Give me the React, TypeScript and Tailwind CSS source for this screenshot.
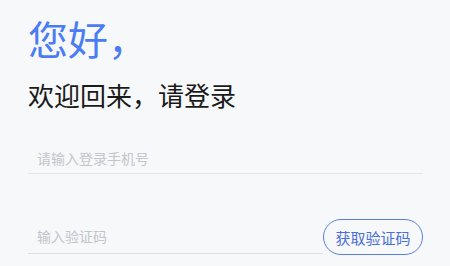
import React from "react";

export default function App() {
  return (
    <div
      className="w-[450px] h-[266px] bg-[#f7f8fa] pl-[28px] pr-[27px] overflow-hidden"
      style={{ fontFamily: '"Noto Sans CJK SC", "Noto Sans", sans-serif' }}
    >
      <div className="pt-[18px] text-[40px] leading-[40px] text-[#4a7cf3]">您好，</div>
      <div className="mt-[24px] text-[26px] leading-[26px] text-[#1a1a1a]">欢迎回来，请登录</div>
      <div className="mt-[35px] h-[31px] border-b border-[#e4e6eb] flex items-center">
        <input
          className="w-full bg-transparent outline-none pl-[9px] text-[14px] text-[#333] placeholder:text-[#c2c5cc]"
          placeholder="请输入登录手机号"
        />
      </div>
      <div className="mt-[45px] flex items-start">
        <div className="flex-1 h-[35px] border-b border-[#dcdfe5] flex items-center">
          <input
            className="w-full bg-transparent outline-none pl-[9px] text-[14px] text-[#333] placeholder:text-[#c2c5cc]"
            placeholder="输入验证码"
          />
        </div>
        <button className="w-[100px] h-[36px] rounded-full border border-[#5b7ee0] text-[#4a6fd8] text-[15px] leading-none flex items-center justify-center">
          获取验证码
        </button>
      </div>
    </div>
  );
}
